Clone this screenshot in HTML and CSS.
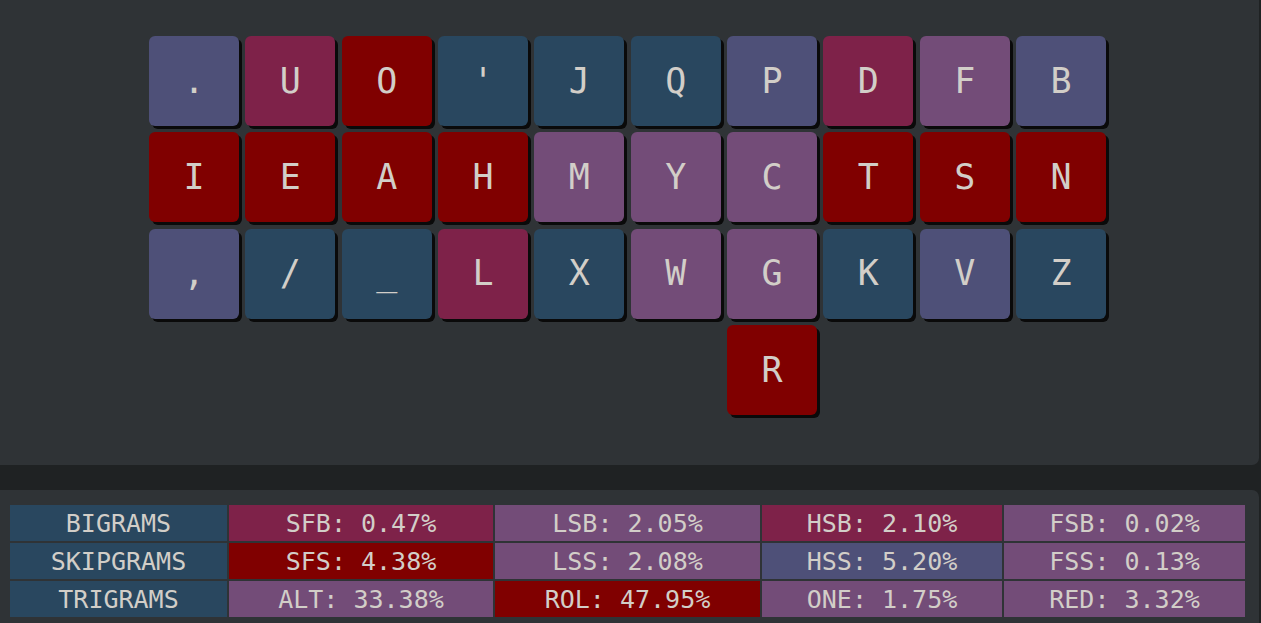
FILE: index.html
```html
<!DOCTYPE html>
<html>
<head>
<meta charset="utf-8">
<link rel="stylesheet" href="styles.css">
</head>
<body>
<div class="top">
  <div class="keyboard">
    <div class="key c-slate">.</div>
    <div class="key c-crim">U</div>
    <div class="key c-red">O</div>
    <div class="key c-blue">'</div>
    <div class="key c-blue">J</div>
    <div class="key c-blue">Q</div>
    <div class="key c-slate">P</div>
    <div class="key c-crim">D</div>
    <div class="key c-purp">F</div>
    <div class="key c-slate">B</div>

    <div class="key c-red">I</div>
    <div class="key c-red">E</div>
    <div class="key c-red">A</div>
    <div class="key c-red">H</div>
    <div class="key c-purp">M</div>
    <div class="key c-purp">Y</div>
    <div class="key c-purp">C</div>
    <div class="key c-red">T</div>
    <div class="key c-red">S</div>
    <div class="key c-red">N</div>

    <div class="key c-slate">,</div>
    <div class="key c-blue">/</div>
    <div class="key c-blue">_</div>
    <div class="key c-crim">L</div>
    <div class="key c-blue">X</div>
    <div class="key c-purp">W</div>
    <div class="key c-purp">G</div>
    <div class="key c-blue">K</div>
    <div class="key c-slate">V</div>
    <div class="key c-blue">Z</div>

    <div class="key c-red col7">R</div>
  </div>
</div>
<div class="bottom">
  <div class="stats">
    <div class="cell c-blue">BIGRAMS</div>
    <div class="cell c-crim">SFB: 0.47%</div>
    <div class="cell c-purp">LSB: 2.05%</div>
    <div class="cell c-crim">HSB: 2.10%</div>
    <div class="cell c-purp">FSB: 0.02%</div>

    <div class="cell c-blue">SKIPGRAMS</div>
    <div class="cell c-red">SFS: 4.38%</div>
    <div class="cell c-purp">LSS: 2.08%</div>
    <div class="cell c-slate">HSS: 5.20%</div>
    <div class="cell c-purp">FSS: 0.13%</div>

    <div class="cell c-blue">TRIGRAMS</div>
    <div class="cell c-purp">ALT: 33.38%</div>
    <div class="cell c-red">ROL: 47.95%</div>
    <div class="cell c-purp">ONE: 1.75%</div>
    <div class="cell c-purp">RED: 3.32%</div>
  </div>
</div>
</body>
</html>
```
FILE: styles.css
```css
html, body {
  margin: 0;
  padding: 0;
  background: #1f2223;
  height: 100%;
  overflow: hidden;
}
body {
  font-family: "DejaVu Sans Mono", monospace;
  color: #d2cec8;
}
.top {
  width: 1259px;
  height: 465px;
  background: #2f3336;
  border-radius: 0 0 7px 0;
  box-sizing: border-box;
  padding: 36px 0 0 149px;
}
.keyboard {
  display: grid;
  grid-template-columns: repeat(10, 90px);
  grid-auto-rows: 90px;
  column-gap: 6.35px;
  row-gap: 6.35px;
}
.key {
  border-radius: 6px;
  box-shadow: 3px 3px 0 #0a0a0a;
  display: flex;
  align-items: center;
  justify-content: center;
  font-size: 35px;
  line-height: 1;
}
.col7 {
  grid-column: 7;
}
.c-slate { background: #4e5078; }
.c-crim { background: #7e2249; }
.c-red { background: #800000; }
.c-blue { background: #29475f; }
.c-purp { background: #734c78; }
.bottom {
  margin-top: 25px;
  width: 1259px;
  height: 140px;
  background: #2f3336;
  border-radius: 0 7px 0 0;
  box-sizing: border-box;
  padding: 15px 0 0 10px;
}
.stats {
  display: grid;
  grid-template-columns: 217px 264px 265px 240px 241px;
  grid-auto-rows: 36px;
  gap: 2px;
}
.cell {
  display: flex;
  align-items: center;
  justify-content: center;
  font-size: 25px;
  line-height: 1;
  white-space: nowrap;
}
```
